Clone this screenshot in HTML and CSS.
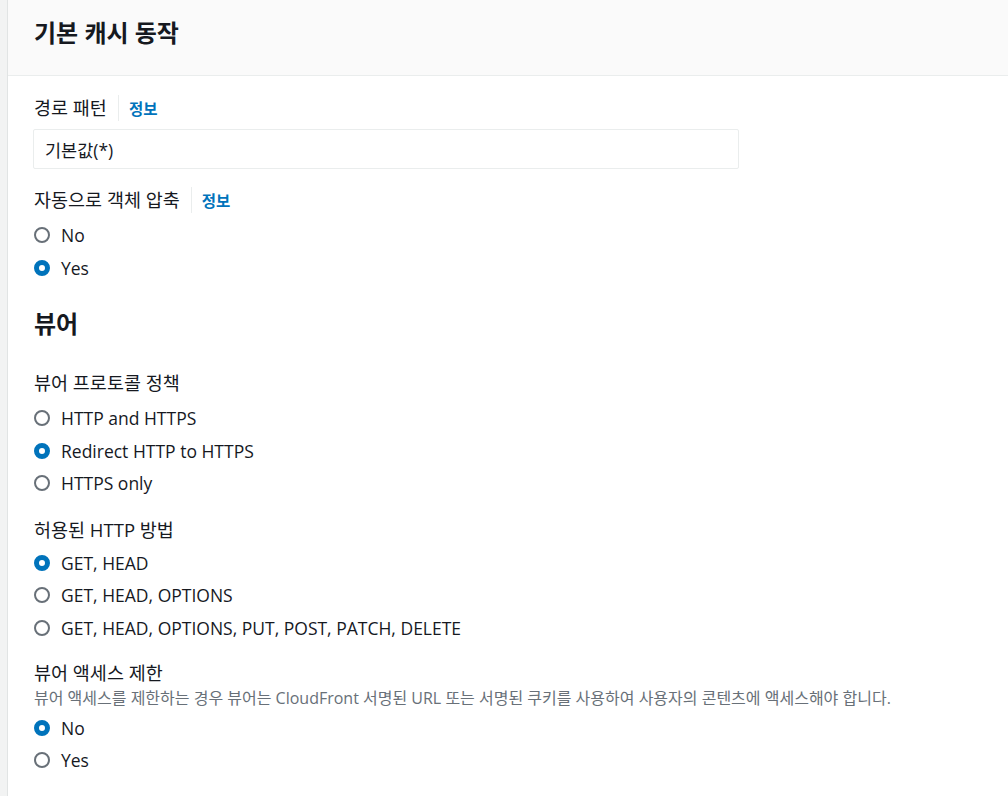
FILE: index.html
```html
<!DOCTYPE html>
<html lang="ko">
<head>
<meta charset="utf-8">
<link rel="stylesheet" href="styles.css">
</head>
<body>
<div class="page">
  <div class="gutter"></div>
  <div class="panel">
    <div class="header"><h2 class="title">기본 캐시 동작</h2></div>
    <div class="content">
      <div class="field f-path">
        <div class="label-row"><span class="label">경로 패턴</span><span class="sep"></span><a class="info">정보</a></div>
        <div class="input">기본값(*)</div>
      </div>
      <div class="field f-compress">
        <div class="label-row"><span class="label">자동으로 객체 압축</span><span class="sep"></span><a class="info">정보</a></div>
        <div class="radios">
          <label class="radio"><span class="dot"></span><span>No</span></label>
          <label class="radio"><span class="dot on"></span><span>Yes</span></label>
        </div>
      </div>
      <h3 class="section">뷰어</h3>
      <div class="field f-protocol">
        <div class="label-row"><span class="label">뷰어 프로토콜 정책</span></div>
        <div class="radios">
          <label class="radio"><span class="dot"></span><span>HTTP and HTTPS</span></label>
          <label class="radio"><span class="dot on"></span><span>Redirect HTTP to HTTPS</span></label>
          <label class="radio"><span class="dot"></span><span>HTTPS only</span></label>
        </div>
      </div>
      <div class="field f-methods">
        <div class="label-row"><span class="label">허용된 HTTP 방법</span></div>
        <div class="radios">
          <label class="radio"><span class="dot on"></span><span>GET, HEAD</span></label>
          <label class="radio"><span class="dot"></span><span>GET, HEAD, OPTIONS</span></label>
          <label class="radio"><span class="dot"></span><span>GET, HEAD, OPTIONS, PUT, POST, PATCH, DELETE</span></label>
        </div>
      </div>
      <div class="field f-restrict">
        <div class="label-row"><span class="label">뷰어 액세스 제한</span></div>
        <div class="desc">뷰어 액세스를 제한하는 경우 뷰어는 CloudFront 서명된 URL 또는 서명된 쿠키를 사용하여 사용자의 콘텐츠에 액세스해야 합니다.</div>
        <div class="radios">
          <label class="radio"><span class="dot on"></span><span>No</span></label>
          <label class="radio"><span class="dot"></span><span>Yes</span></label>
        </div>
      </div>
    </div>
  </div>
</div>
</body>
</html>
```

FILE: styles.css
```css
html, body {
  margin: 0;
  padding: 0;
  background: #ffffff;
}
body {
  font-family: "Open Sans", "Noto Sans CJK KR", sans-serif;
  color: #16191f;
  font-size: 16px;
}
.page {
  display: flex;
  min-height: 796px;
}
.gutter {
  width: 7px;
  background: #f2f3f3;
  border-right: 1px solid #e1e4e4;
  flex: none;
}
.panel {
  flex: 1;
  background: #ffffff;
}
.header {
  height: 76px;
  box-sizing: border-box;
  background: #fafafa;
  border-bottom: 1px solid #eaeded;
  padding: 17px 0 0 26px;
}
.title {
  margin: 0;
  font-size: 24px;
  font-weight: 700;
  line-height: 32px;
}
.content {
  padding: 17px 0 0 26px;
}
.field {
  margin: 0;
}
.f-compress { margin-top: 16px; }
.f-protocol { margin-top: 26px; }
.f-methods { margin-top: 15px; }
.f-restrict { margin-top: 14px; }
.label-row {
  display: flex;
  align-items: center;
  height: 30px;
}
.label {
  font-size: 18.5px;
  line-height: 26px;
}
.sep {
  width: 1px;
  height: 26px;
  background: #eaeded;
  margin: 0 10px 0 11px;
}
.info {
  color: #0073bb;
  font-size: 15.5px;
  font-weight: 700;
}
.input {
  box-sizing: border-box;
  width: 706px;
  height: 40px;
  margin: 6px 0 0 -1px;
  border: 1px solid #eaeded;
  border-radius: 2px;
  padding-left: 11px;
  display: flex;
  align-items: center;
  font-size: 17.5px;
}
.radios {
  display: flex;
  flex-direction: column;
  margin-top: 4px;
}
.f-methods .radios { margin-top: 2px; }
.f-restrict .radios { margin-top: 3.5px; }
.radio {
  display: flex;
  align-items: center;
  height: 32.5px;
  font-size: 17.5px;
}
.dot {
  box-sizing: border-box;
  width: 16px;
  height: 16px;
  border: 2px solid #687078;
  border-radius: 50%;
  margin: 0 11px 0 0;
  flex: none;
}
.dot.on {
  border: 5px solid #0073bb;
  background: #ffffff;
}
.section {
  margin: 22px 0 0 0;
  font-size: 24px;
  font-weight: 700;
  line-height: 36px;
}
.desc {
  font-size: 16px;
  color: #687078;
  line-height: 20px;
}
```
